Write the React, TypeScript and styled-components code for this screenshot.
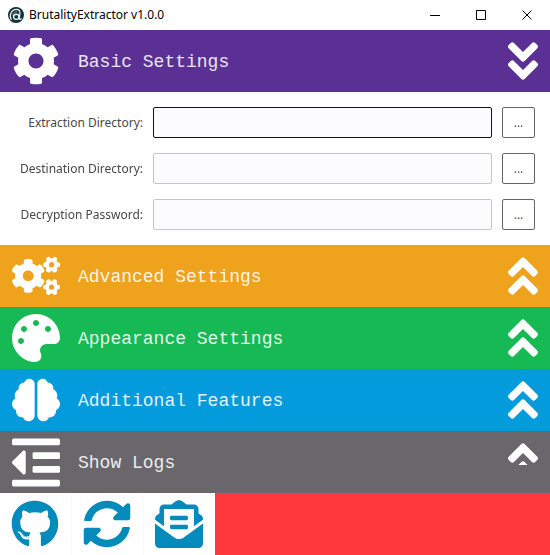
import React, { useState } from "react";
import styled, { createGlobalStyle } from "styled-components";
import {
  FaCog,
  FaCogs,
  FaPalette,
  FaBrain,
  FaOutdent,
  FaGithub,
  FaSyncAlt,
  FaEnvelopeOpenText,
  FaAngleDoubleUp,
  FaAngleDoubleDown,
} from "react-icons/fa";

const GlobalStyle = createGlobalStyle`
  * { box-sizing: border-box; }
  body { margin: 0; background: #ffffff; }
  button, input { font: inherit; }
`;

const Window = styled.main`
  display: flex;
  flex-direction: column;
  min-height: 100vh;
  font-family: "Noto Sans", "Open Sans", sans-serif;
  background: #ffffff;
`;

const TitleBar = styled.header`
  display: flex;
  align-items: center;
  height: 30px;
  padding-left: 8px;
  gap: 5px;
`;

const Title = styled.h1`
  flex: 1;
  margin: 0;
  font: 400 12px/16px "Noto Sans", "Open Sans", sans-serif;
  color: #000000;
`;

const CaptionButtons = styled.div`
  display: flex;
`;

const CaptionButton = styled.button`
  display: flex;
  align-items: center;
  justify-content: center;
  width: 46px;
  height: 30px;
  padding: 0;
  border: 0;
  background: transparent;
  color: #000000;
`;

const SectionButton = styled.button<{ $color: string }>`
  display: flex;
  align-items: center;
  width: 100%;
  height: 62px;
  padding: 0 12px;
  gap: 18px;
  border: 0;
  background: ${(p) => p.$color};
  color: #ffffff;
  text-align: left;
`;

const SectionIcon = styled.span`
  display: flex;
  align-items: center;
  justify-content: center;
  width: 48px;
  height: 48px;
  flex: none;
`;

const SectionTitle = styled.span`
  flex: 1;
  padding-top: 2px;
  font: 400 18px/24px "Liberation Mono", monospace;
  opacity: 0.88;
`;

const Chevron = styled.span<{ $clipped?: boolean }>`
  display: flex;
  justify-content: center;
  width: 30px;
  height: 48px;
  flex: none;

  & > svg {
    flex: none;
    ${(p) => p.$clipped && "clip-path: inset(0 0 21px 0);"}
  }
`;

const Form = styled.form`
  display: flex;
  flex-direction: column;
  gap: 15px;
  padding: 15px;
`;

const Field = styled.div`
  display: grid;
  grid-template-columns: 128px 1fr 33px;
  column-gap: 10px;
  align-items: center;
`;

const Label = styled.label`
  font-size: 12px;
  line-height: 18px;
  color: #484848;
  text-align: right;
  white-space: nowrap;
`;

const TextBox = styled.input`
  width: 100%;
  min-width: 0;
  height: 31px;
  padding: 0 6px;
  border: 1px solid #c6c6c6;
  border-radius: 2px;
  background: #fcfcff;
  font-size: 12px;
  outline: 0;

  &:focus {
    border-color: #141418;
  }
`;

const BrowseButton = styled.button`
  height: 31px;
  padding: 0;
  border: 1px solid #66666a;
  border-radius: 2px;
  background: #ffffff;
  color: #55555a;
  font-size: 12px;
`;

const Footer = styled.footer`
  display: flex;
  flex: 1;
  min-height: 62px;
  background: #ff383c;
`;

const FooterButton = styled.button`
  display: flex;
  align-items: center;
  justify-content: center;
  width: 72px;
  border: 0;
  border-right: 1px solid #f8f8f8;
  padding: 0 1px 0 0;
  background: #ffffff;
  color: #058bbb;

  &:last-child {
    width: 71px;
    border-right: 0;
  }
`;

const Logo = () => (
  <svg width="16" height="16" viewBox="0 0 16 16" aria-hidden="true">
    <circle cx="8" cy="8" r="8" fill="#17313a" />
    <g fill="none" stroke="#e6f2f0" strokeLinecap="round">
      <path d="M3.2 12.4C.8 8 3.6 2.4 8.4 2.4c2.6 0 3.8 1.6 3.5 4l-.6 5c-.1 1.3 1 1.3 2 .4" strokeWidth="1.2" />
      <ellipse cx="8.3" cy="9.8" rx="2.7" ry="2.6" strokeWidth="1.4" />
      <path d="M4.6 8.2c.5-2.2 2.1-3.6 4.4-3.6" strokeWidth="0.7" opacity="0.6" />
    </g>
  </svg>
);

const fields = [
  { id: "extraction", label: "Extraction Directory:" },
  { id: "destination", label: "Destination Directory:" },
  { id: "password", label: "Decryption Password:" },
];

const sections = [
  { title: "Advanced Settings", color: "#efa31d", icon: <FaCogs size={48} /> },
  { title: "Appearance Settings", color: "#17b955", icon: <FaPalette size={48} /> },
  { title: "Additional Features", color: "#049bdc", icon: <FaBrain size={48} /> },
  { title: "Show Logs", color: "#69676c", icon: <FaOutdent size={55} />, clipped: true },
];

export default function App() {
  const [open, setOpen] = useState(true);

  return (
    <>
      <GlobalStyle />
      <Window>
        <TitleBar>
          <Logo />
          <Title>BrutalityExtractor v1.0.0</Title>
          <CaptionButtons>
            <CaptionButton aria-label="Minimize">
              <svg width="11" height="11" stroke="currentColor"><path d="M0 5.5h10" /></svg>
            </CaptionButton>
            <CaptionButton aria-label="Maximize">
              <svg width="11" height="11" fill="none" stroke="currentColor"><path d="M.5.5h9v9h-9z" /></svg>
            </CaptionButton>
            <CaptionButton aria-label="Close">
              <svg width="11" height="11" stroke="currentColor"><path d="M.5.5l9 9M9.5.5l-9 9" /></svg>
            </CaptionButton>
          </CaptionButtons>
        </TitleBar>

        <SectionButton $color="#5b3094" aria-expanded={open} onClick={() => setOpen(!open)}>
          <SectionIcon><FaCog size={48} /></SectionIcon>
          <SectionTitle>Basic Settings</SectionTitle>
          <Chevron><FaAngleDoubleDown size={48} /></Chevron>
        </SectionButton>

        {open && (
          <Form onSubmit={(e) => e.preventDefault()}>
            {fields.map((f, i) => (
              <Field key={f.id}>
                <Label htmlFor={f.id}>{f.label}</Label>
                <TextBox id={f.id} type="text" autoFocus={i === 0} />
                <BrowseButton type="button" aria-label={`Browse, ${f.label}`}>...</BrowseButton>
              </Field>
            ))}
          </Form>
        )}

        {sections.map((s) => (
          <SectionButton key={s.title} $color={s.color} aria-expanded={false}>
            <SectionIcon>{s.icon}</SectionIcon>
            <SectionTitle>{s.title}</SectionTitle>
            <Chevron $clipped={s.clipped}><FaAngleDoubleUp size={48} /></Chevron>
          </SectionButton>
        ))}

        <Footer>
          <FooterButton aria-label="GitHub"><FaGithub size={48} /></FooterButton>
          <FooterButton aria-label="Check for updates"><FaSyncAlt size={48} /></FooterButton>
          <FooterButton aria-label="Send feedback"><FaEnvelopeOpenText size={48} /></FooterButton>
        </Footer>
      </Window>
    </>
  );
}
